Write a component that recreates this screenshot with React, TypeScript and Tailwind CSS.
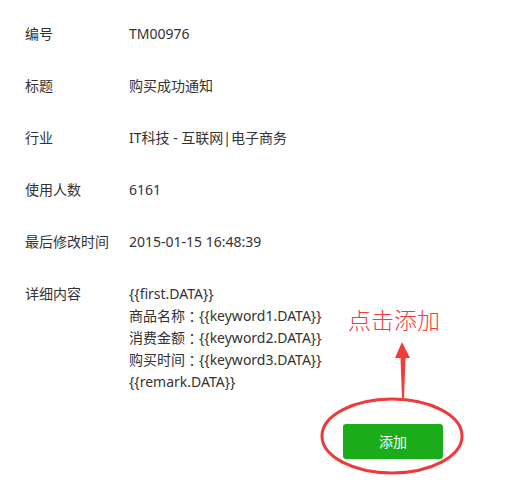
const rows: { label: string; value: string }[] = [
  { label: '编号', value: 'TM00976' },
  { label: '标题', value: '购买成功通知' },
  { label: '行业', value: 'IT科技 - 互联网|电子商务' },
  { label: '使用人数', value: '6161' },
  { label: '最后修改时间', value: '2015-01-15 16:48:39' },
];

// [prefix, value] — full-width colon sits between them
const detail: [string, string][] = [
  ['', '{{first.DATA}}'],
  ['商品名称', '{{keyword1.DATA}}'],
  ['消费金额', '{{keyword2.DATA}}'],
  ['购买时间', '{{keyword3.DATA}}'],
  ['', '{{remark.DATA}}'],
];

export default function App() {
  return (
    <div
      className="relative w-[516px] h-[497px] bg-white text-[14px] leading-[22px] text-[#333]"
      style={{ fontFamily: '"Noto Sans", "Noto Sans CJK SC", sans-serif' }}
    >
      <div className="flex flex-col gap-[30px] pt-[23px] pl-[25px]">
        {rows.map((r) => (
          <div key={r.label} className="flex">
            <div className="w-[104px] shrink-0">{r.label}</div>
            <div>{r.value}</div>
          </div>
        ))}
        <div className="flex">
          <div className="w-[104px] shrink-0">详细内容</div>
          <div className="flex flex-col">
            {detail.map(([k, v]) => (
              <div key={v} className="h-[22px]">
                {k}
                {k && (
                  <span className="inline-block h-[22px] align-top font-['Noto_Sans_CJK_JP']">：</span>
                )}
                {v}
              </div>
            ))}
          </div>
        </div>
      </div>

      <div className="flex pl-[343px] pt-[31px]">
        <button className="w-[100px] h-[35px] rounded-[3px] bg-[#1aad19] text-white text-[14px]">
          添加
        </button>
      </div>

      {/* annotation */}
      <div className="absolute left-[348px] top-[305px] text-[23px] leading-[30px] text-[#f43c3c] font-light">
        点击添加
      </div>
      <svg className="absolute left-[390px] top-[338px]" width="26" height="62" viewBox="0 0 26 62">
        <path d="M12 4 L5 20 L10.5 20 L12 60 L14 60 L15.5 20 L20 20 Z" fill="#f23b3b" />
      </svg>
      <svg className="absolute left-[318px] top-[395px]" width="150" height="82" viewBox="0 0 150 82">
        <ellipse cx="74" cy="41" rx="70" ry="37" fill="none" stroke="#ee3a3a" strokeWidth="3" />
      </svg>
    </div>
  );
}
